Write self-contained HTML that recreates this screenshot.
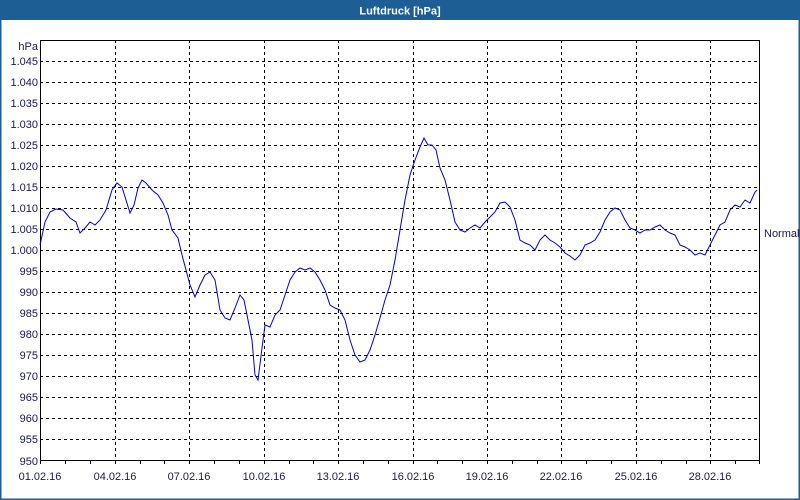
<!DOCTYPE html>
<html><head><style>
body{margin:0;width:800px;height:500px;overflow:hidden;background:#fff;font-family:"Liberation Sans",sans-serif}
</style></head><body>
<svg width="800" height="500" xmlns="http://www.w3.org/2000/svg" style="display:block">
<rect x="0" y="0" width="800" height="500" fill="#fff"/>
<rect x="0.5" y="0.5" width="799" height="499" fill="none" stroke="#1d5e94" stroke-width="2"/>
<rect x="0" y="0" width="800" height="20" fill="#1d5e94"/>
<text x="400" y="14.5" fill="#fff" font-size="11" font-weight="bold" text-anchor="middle">Luftdruck [hPa]</text>
<g stroke="#000" stroke-width="1" stroke-dasharray="3,3" shape-rendering="crispEdges">
<line x1="40" y1="61.5" x2="760" y2="61.5"/><line x1="40" y1="82.5" x2="760" y2="82.5"/><line x1="40" y1="103.5" x2="760" y2="103.5"/><line x1="40" y1="124.5" x2="760" y2="124.5"/><line x1="40" y1="145.5" x2="760" y2="145.5"/><line x1="40" y1="166.5" x2="760" y2="166.5"/><line x1="40" y1="187.5" x2="760" y2="187.5"/><line x1="40" y1="208.5" x2="760" y2="208.5"/><line x1="40" y1="229.5" x2="760" y2="229.5"/><line x1="40" y1="250.5" x2="760" y2="250.5"/><line x1="40" y1="271.5" x2="760" y2="271.5"/><line x1="40" y1="292.5" x2="760" y2="292.5"/><line x1="40" y1="313.5" x2="760" y2="313.5"/><line x1="40" y1="334.5" x2="760" y2="334.5"/><line x1="40" y1="355.5" x2="760" y2="355.5"/><line x1="40" y1="376.5" x2="760" y2="376.5"/><line x1="40" y1="397.5" x2="760" y2="397.5"/><line x1="40" y1="418.5" x2="760" y2="418.5"/><line x1="40" y1="439.5" x2="760" y2="439.5"/>
<line x1="115.5" y1="40" x2="115.5" y2="460"/><line x1="189.5" y1="40" x2="189.5" y2="460"/><line x1="264.5" y1="40" x2="264.5" y2="460"/><line x1="338.5" y1="40" x2="338.5" y2="460"/><line x1="413.5" y1="40" x2="413.5" y2="460"/><line x1="487.5" y1="40" x2="487.5" y2="460"/><line x1="561.5" y1="40" x2="561.5" y2="460"/><line x1="636.5" y1="40" x2="636.5" y2="460"/><line x1="710.5" y1="40" x2="710.5" y2="460"/>
</g>
<rect x="40.5" y="40.5" width="719" height="420" fill="none" stroke="#000" stroke-width="1" shape-rendering="crispEdges"/>
<g stroke="#000" shape-rendering="crispEdges" id="ticks"></g>
<polyline fill="none" stroke="#0000e0" stroke-width="1" points="40,245 45,222 50,212 56,209 63,210 70,218 76,222 80,233 85,228 90,222 95,225 100,220 106,210 112,190 117,183 122,187 126,200 130,213 134,205 138,188 142,180 146,183 152,190 158,195 163,203 168,215 172,230 178,238 182,255 186,270 190,285 195,297 200,285 205,275 210,272 215,280 220,310 225,318 230,320 235,308 240,295 244,300 248,320 252,340 255,375 258,380 262,348 265,325 270,327 275,315 280,310 285,295 290,280 295,272 300,268 305,270 310,268 315,272 320,280 325,290 330,305 335,308 340,310 345,320 350,340 355,355 360,362 365,360 370,350 375,335 380,318 385,300 390,285 395,260 400,230 405,200 410,175 415,160 420,147 424,138 428,145 432,145 436,150 440,168 445,180 450,200 455,222 460,230 465,232 470,228 475,225 480,228 485,222 490,217 495,212 500,203 505,202 510,207 515,220 520,240 525,243 530,245 535,250 540,240 545,235 550,240 555,243 560,247 565,253 570,256 575,260 580,255 585,245 590,243 595,240 600,232 605,220 610,212 615,208 620,210 625,220 630,228 635,230 640,233 645,230 650,230 655,227 660,225 665,230 670,233 675,235 680,245 685,247 690,250 695,255 700,253 705,255 710,245 715,235 720,225 725,222 730,210 735,205 740,207 745,200 750,203 755,192 757,190"/>
<g fill="#1a1a50" font-size="11" text-anchor="end">
<text x="38" y="50">hPa</text>
<text x="38" y="65">1.045</text><text x="38" y="86">1.040</text><text x="38" y="107">1.035</text><text x="38" y="128">1.030</text><text x="38" y="149">1.025</text><text x="38" y="170">1.020</text><text x="38" y="191">1.015</text><text x="38" y="212">1.010</text><text x="38" y="233">1.005</text><text x="38" y="254">1.000</text><text x="38" y="275">995</text><text x="38" y="296">990</text><text x="38" y="317">985</text><text x="38" y="338">980</text><text x="38" y="359">975</text><text x="38" y="380">970</text><text x="38" y="401">965</text><text x="38" y="422">960</text><text x="38" y="443">955</text><text x="38" y="465">950</text>
</g>
<g fill="#1a1a50" font-size="11" text-anchor="middle">
<text x="40" y="480">01.02.16</text><text x="115" y="480">04.02.16</text><text x="189" y="480">07.02.16</text><text x="264" y="480">10.02.16</text><text x="338" y="480">13.02.16</text><text x="413" y="480">16.02.16</text><text x="487" y="480">19.02.16</text><text x="561" y="480">22.02.16</text><text x="636" y="480">25.02.16</text><text x="710" y="480">28.02.16</text>
</g>
<text x="764" y="237" fill="#1a1a50" font-size="11">Normal</text>
<g stroke="#000" shape-rendering="crispEdges">
<path d="M40.5 460v4M65.5 460v4M90.5 460v4M115.5 460v4M140.5 460v4M164.5 460v4M189.5 460v4M214.5 460v4M239.5 460v4M264.5 460v4M289.5 460v4M313.5 460v4M338.5 460v4M363.5 460v4M388.5 460v4M413.5 460v4M437.5 460v4M462.5 460v4M487.5 460v4M512.5 460v4M537.5 460v4M561.5 460v4M586.5 460v4M611.5 460v4M636.5 460v4M661.5 460v4M686.5 460v4M710.5 460v4M735.5 460v4M759.5 460v4"/>
</g>
</svg>
</body></html>
